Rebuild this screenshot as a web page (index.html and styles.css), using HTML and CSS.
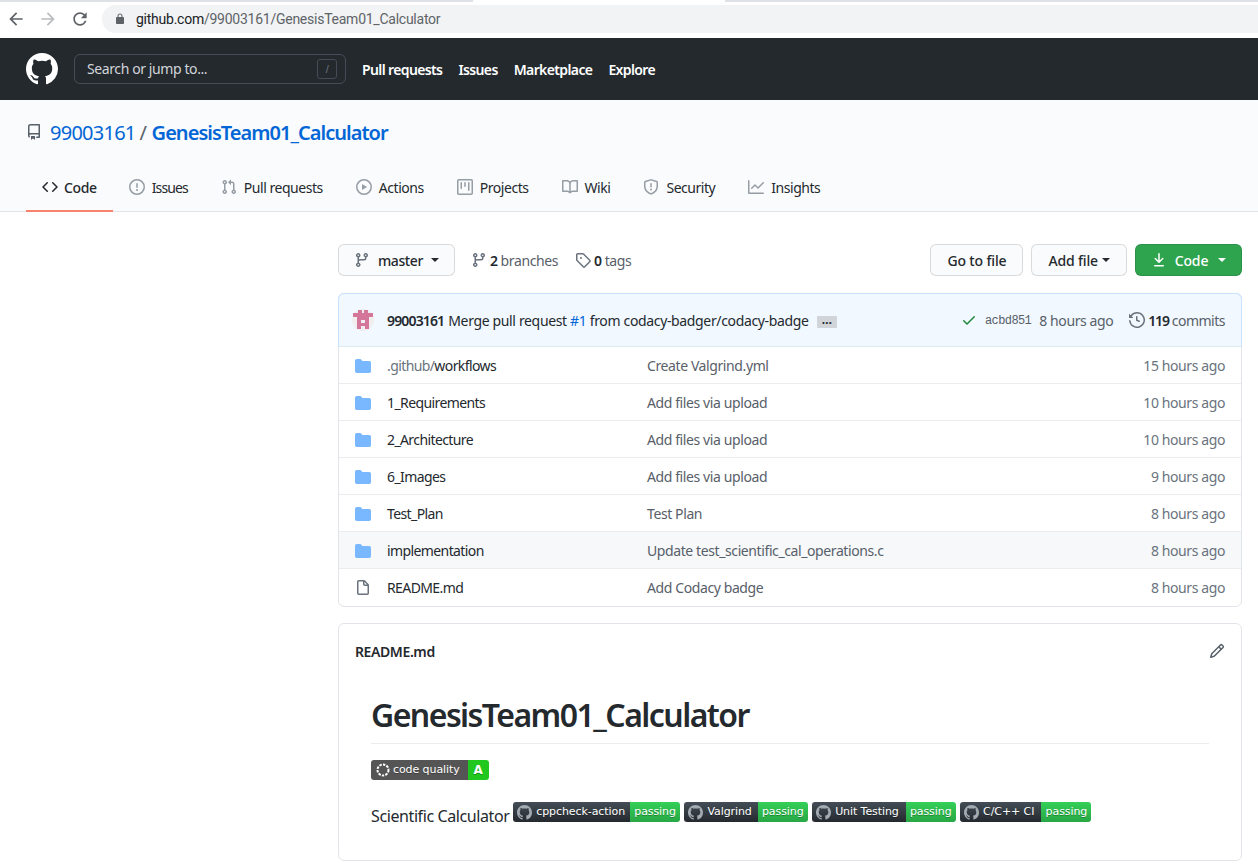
FILE: index.html
```html
<!DOCTYPE html>
<html lang="en">
<head>
<meta charset="UTF-8">
<title>GenesisTeam01_Calculator</title>
<link rel="stylesheet" href="styles.css">
</head>
<body>
<svg class="sprite" width="0" height="0">
  <symbol id="i-repo" viewBox="0 0 16 16"><path d="M2 2.5A2.5 2.5 0 014.5 0h8.75a.75.75 0 01.75.75v12.5a.75.75 0 01-.75.75h-2.5a.75.75 0 110-1.5h1.75v-2h-8a1 1 0 00-.714 1.7.75.75 0 01-1.072 1.05A2.495 2.495 0 012 11.5v-9zm10.5-1V9h-8c-.356 0-.694.074-1 .208V2.5a1 1 0 011-1h8zM5 12.25v3.25a.25.25 0 00.4.2l1.45-1.087a.25.25 0 01.3 0L8.6 15.7a.25.25 0 00.4-.2v-3.25a.25.25 0 00-.25-.25h-3.5a.25.25 0 00-.25.25z"/></symbol>
  <symbol id="i-code" viewBox="0 0 16 16"><path d="M4.72 3.22a.75.75 0 011.06 1.06L2.06 8l3.72 3.72a.75.75 0 11-1.06 1.06L.47 8.53a.75.75 0 010-1.06l4.25-4.25zm6.56 0a.75.75 0 10-1.06 1.06L13.94 8l-3.72 3.72a.75.75 0 101.06 1.06l4.25-4.25a.75.75 0 000-1.06l-4.25-4.25z"/></symbol>
  <symbol id="i-issue" viewBox="0 0 16 16"><path d="M8 1.5a6.5 6.5 0 100 13 6.5 6.5 0 000-13zM0 8a8 8 0 1116 0A8 8 0 010 8zm9 3a1 1 0 11-2 0 1 1 0 012 0zm-.25-6.25a.75.75 0 00-1.5 0v3.5a.75.75 0 001.5 0v-3.5z"/></symbol>
  <symbol id="i-pr" viewBox="0 0 16 16"><path d="M7.177 3.073L9.573.677A.25.25 0 0110 .854v4.792a.25.25 0 01-.427.177L7.177 3.427a.25.25 0 010-.354zM3.75 2.5a.75.75 0 100 1.5.75.75 0 000-1.5zm-2.25.75a2.25 2.25 0 113 2.122v5.256a2.251 2.251 0 11-1.5 0V5.372A2.25 2.25 0 011.5 3.25zM11 2.5h-1V4h1a1 1 0 011 1v5.628a2.251 2.251 0 101.5 0V5A2.5 2.5 0 0011 2.5zm1 10.25a.75.75 0 111.5 0 .75.75 0 01-1.5 0zM3.75 12a.75.75 0 100 1.5.75.75 0 000-1.5z"/></symbol>
  <symbol id="i-play" viewBox="0 0 16 16"><path d="M1.5 8a6.5 6.5 0 1113 0 6.5 6.5 0 01-13 0zM8 0a8 8 0 100 16A8 8 0 008 0zM6.379 5.227A.25.25 0 006 5.442v5.117a.25.25 0 00.379.214l4.264-2.559a.25.25 0 000-.428L6.379 5.227z"/></symbol>
  <symbol id="i-project" viewBox="0 0 16 16"><path d="M1.75 0A1.75 1.75 0 000 1.75v12.5C0 15.216.784 16 1.75 16h12.5A1.75 1.75 0 0016 14.25V1.75A1.75 1.75 0 0014.25 0H1.75zM1.5 1.75a.25.25 0 01.25-.25h12.5a.25.25 0 01.25.25v12.5a.25.25 0 01-.25.25H1.75a.25.25 0 01-.25-.25V1.75zM11.75 3a.75.75 0 00-.75.75v7.5a.75.75 0 001.5 0v-7.5a.75.75 0 00-.75-.75zm-8.25.75a.75.75 0 011.5 0v5.5a.75.75 0 01-1.5 0v-5.5zM8 3a.75.75 0 00-.75.75v3.5a.75.75 0 001.5 0v-3.5A.75.75 0 008 3z"/></symbol>
  <symbol id="i-book" viewBox="0 0 16 16"><path d="M0 1.75A.75.75 0 01.75 1h4.253c1.227 0 2.317.59 3 1.501A3.744 3.744 0 0111.006 1h4.245a.75.75 0 01.75.75v10.5a.75.75 0 01-.75.75h-4.507a2.25 2.25 0 00-1.591.659l-.622.621a.75.75 0 01-1.06 0l-.622-.621A2.25 2.25 0 005.258 13H.75a.75.75 0 01-.75-.75V1.75zm8.755 3a2.25 2.25 0 012.25-2.25H14.5v9h-3.757c-.71 0-1.4.201-1.992.572l.004-7.322zm-1.504 7.324l.004-5.073-.002-2.253A2.25 2.25 0 005.003 2.5H1.5v9h3.757a3.75 3.75 0 011.994.574z"/></symbol>
  <symbol id="i-shield" viewBox="0 0 16 16"><path d="M7.467.133a1.75 1.75 0 011.066 0l5.25 1.68A1.75 1.75 0 0115 3.48V7c0 1.566-.32 3.182-1.303 4.682-.983 1.498-2.585 2.813-5.032 3.855a1.7 1.7 0 01-1.33 0c-2.447-1.042-4.049-2.357-5.032-3.855C1.32 10.182 1 8.566 1 7V3.48a1.75 1.75 0 011.217-1.667l5.25-1.68zm.61 1.429a.25.25 0 00-.153 0l-5.25 1.68a.25.25 0 00-.174.238V7c0 1.358.275 2.666 1.057 3.86.784 1.194 2.121 2.34 4.366 3.297a.2.2 0 00.154 0c2.245-.956 3.582-2.104 4.366-3.298C13.225 9.666 13.5 8.36 13.5 7V3.48a.25.25 0 00-.174-.237l-5.25-1.68zM9 10.5a1 1 0 11-2 0 1 1 0 012 0zm-.25-5.75a.75.75 0 10-1.5 0v3a.75.75 0 001.5 0v-3z"/></symbol>
  <symbol id="i-graph" viewBox="0 0 16 16"><path d="M1.5 1.75a.75.75 0 00-1.5 0v12.5c0 .414.336.75.75.75h14.5a.75.75 0 000-1.5H1.5V1.75zm14.28 2.53a.75.75 0 00-1.06-1.06L10 7.94 7.53 5.47a.75.75 0 00-1.06 0L3.22 8.72a.75.75 0 001.06 1.06L7 7.06l2.47 2.47a.75.75 0 001.06 0l5.25-5.25z"/></symbol>
  <symbol id="i-branch" viewBox="0 0 16 16"><path d="M11.75 2.5a.75.75 0 100 1.5.75.75 0 000-1.5zm-2.25.75a2.25 2.25 0 113 2.122V6A2.5 2.5 0 0110 8.5H6a1 1 0 00-1 1v1.128a2.251 2.251 0 11-1.5 0V5.372a2.25 2.25 0 111.5 0v1.836A2.492 2.492 0 016 7h4a1 1 0 001-1v-.628A2.25 2.25 0 019.5 3.25zM4.25 12a.75.75 0 100 1.5.75.75 0 000-1.5zM3.5 3.25a.75.75 0 111.5 0 .75.75 0 01-1.5 0z"/></symbol>
  <symbol id="i-tag" viewBox="0 0 16 16"><path d="M2.5 7.775V2.75a.25.25 0 01.25-.25h5.025a.25.25 0 01.177.073l6.25 6.25a.25.25 0 010 .354l-5.025 5.025a.25.25 0 01-.354 0l-6.25-6.25a.25.25 0 01-.073-.177zm-1.5 0V2.75C1 1.784 1.784 1 2.75 1h5.025c.464 0 .91.184 1.238.513l6.25 6.25a1.75 1.75 0 010 2.474l-5.026 5.026a1.75 1.75 0 01-2.474 0l-6.25-6.25A1.75 1.75 0 011 7.775zM6 5a1 1 0 100 2 1 1 0 000-2z"/></symbol>
  <symbol id="i-download" viewBox="0 0 16 16"><path d="M7.47 10.78a.75.75 0 001.06 0l3.75-3.75a.75.75 0 00-1.06-1.06L8.75 8.44V1.75a.75.75 0 00-1.5 0v6.69L4.78 5.97a.75.75 0 00-1.06 1.06l3.75 3.75zM3.75 13a.75.75 0 000 1.5h8.5a.75.75 0 000-1.5h-8.5z"/></symbol>
  <symbol id="i-check" viewBox="0 0 16 16"><path d="M13.78 4.22a.75.75 0 010 1.06l-7.25 7.25a.75.75 0 01-1.06 0L2.22 9.28a.75.75 0 011.06-1.06L6 10.94l6.72-6.72a.75.75 0 011.06 0z"/></symbol>
  <symbol id="i-history" viewBox="0 0 16 16"><path d="M1.643 3.143L.427 1.927A.25.25 0 000 2.104V5.75c0 .138.112.25.25.25h3.646a.25.25 0 00.177-.427L2.715 4.215a6.5 6.5 0 11-1.18 4.458.75.75 0 10-1.493.154 8.001 8.001 0 101.6-5.684zM7.75 4a.75.75 0 01.75.75v2.992l2.028.812a.75.75 0 01-.557 1.392l-2.5-1A.75.75 0 017 8.25v-3.5A.75.75 0 017.75 4z"/></symbol>
  <symbol id="i-folder" viewBox="0 0 16 16"><path d="M1.75 1A1.75 1.75 0 000 2.75v10.5C0 14.216.784 15 1.75 15h12.5A1.75 1.75 0 0016 13.25v-8.5A1.75 1.75 0 0014.25 3H7.5a.25.25 0 01-.2-.1l-.9-1.2C6.07 1.26 5.55 1 5 1H1.75z"/></symbol>
  <symbol id="i-file" viewBox="0 0 16 16"><path d="M3.75 1.5a.25.25 0 00-.25.25v11.5c0 .138.112.25.25.25h8.5a.25.25 0 00.25-.25V6H9.75A1.75 1.75 0 018 4.25V1.5H3.75zm5.75.56v2.19c0 .138.112.25.25.25h2.19L9.5 2.06zM2 1.75C2 .784 2.784 0 3.75 0h5.086c.464 0 .909.184 1.237.513l3.414 3.414c.329.328.513.773.513 1.237v8.086A1.75 1.75 0 0112.25 15h-8.5A1.75 1.75 0 012 13.25V1.75z"/></symbol>
  <symbol id="i-pencil" viewBox="0 0 16 16"><path d="M11.013 1.427a1.75 1.75 0 012.474 0l1.086 1.086a1.75 1.75 0 010 2.474l-8.61 8.61c-.21.21-.47.364-.756.445l-3.251.93a.75.75 0 01-.927-.928l.929-3.25a1.75 1.75 0 01.445-.758l8.61-8.61zm1.414 1.06a.25.25 0 00-.354 0L10.811 3.75l1.439 1.44 1.263-1.263a.25.25 0 000-.354l-1.086-1.086zM11.189 6.25L9.75 4.81l-6.286 6.287a.25.25 0 00-.064.108l-.558 1.953 1.953-.558a.249.249 0 00.108-.064l6.286-6.286z"/></symbol>
  <symbol id="i-github" viewBox="0 0 16 16"><path d="M8 0C3.58 0 0 3.58 0 8c0 3.54 2.29 6.53 5.47 7.59.4.07.55-.17.55-.38 0-.19-.01-.82-.01-1.49-2.01.37-2.53-.49-2.69-.94-.09-.23-.48-.94-.82-1.13-.28-.15-.68-.52-.01-.53.63-.01 1.08.58 1.23.82.72 1.21 1.87.87 2.33.66.07-.52.28-.87.51-1.07-1.78-.2-3.64-.89-3.64-3.95 0-.87.31-1.59.82-2.15-.08-.2-.36-1.02.08-2.12 0 0 .67-.21 2.2.82.64-.18 1.32-.27 2-.27.68 0 1.36.09 2 .27 1.53-1.04 2.2-.82 2.2-.82.44 1.1.16 1.92.08 2.12.51.56.82 1.27.82 2.15 0 3.07-1.87 3.75-3.65 3.95.29.25.54.73.54 1.48 0 1.07-.01 1.93-.01 2.2 0 .21.15.46.55.38A8.013 8.013 0 0016 8c0-4.42-3.58-8-8-8z"/></symbol>
</svg>

<div class="chrome">
  <div class="tabstrip"></div>
  <div class="toolbar">
    <svg class="nav-btn" viewBox="0 0 24 24"><path d="M20 11H7.83l5.59-5.59L12 4l-8 8 8 8 1.41-1.41L7.83 13H20v-2z"/></svg>
    <svg class="nav-btn off" viewBox="0 0 24 24"><path d="M4 11h12.17l-5.59-5.59L12 4l8 8-8 8-1.41-1.41L16.17 13H4v-2z"/></svg>
    <svg class="nav-btn" viewBox="0 0 24 24"><path d="M17.65 6.35C16.2 4.9 14.21 4 12 4c-4.42 0-7.99 3.58-7.99 8s3.57 8 7.99 8c3.73 0 6.84-2.55 7.73-6h-2.08c-.82 2.33-3.04 4-5.65 4-3.31 0-6-2.69-6-6s2.69-6 6-6c1.66 0 3.14.69 4.22 1.78L13 11h7V4l-2.35 2.35z"/></svg>
    <div class="omnibox">
      <svg class="lock" viewBox="0 0 24 24"><path d="M18 8h-1V6c0-2.76-2.24-5-5-5S7 3.24 7 6v2H6c-1.1 0-2 .9-2 2v10c0 1.1.9 2 2 2h12c1.1 0 2-.9 2-2V10c0-1.1-.9-2-2-2zM9 6c0-1.66 1.34-3 3-3s3 1.34 3 3v2H9V6z"/></svg>
      <span class="url"><b>github.com</b>/99003161/GenesisTeam01_Calculator</span>
    </div>
  </div>
</div>

<header class="topbar">
  <svg class="logo"><use href="#i-github"/></svg>
  <div class="search">
    <span class="search-text">Search or jump to...</span>
    <kbd class="slash">/</kbd>
  </div>
  <nav class="topnav">
    <a>Pull requests</a>
    <a>Issues</a>
    <a>Marketplace</a>
    <a>Explore</a>
  </nav>
</header>

<section class="repohead">
  <h2 class="reponame">
    <svg class="icon repo-icon"><use href="#i-repo"/></svg>
    <a class="owner">99003161</a>
    <span class="sep">/</span>
    <a class="name">GenesisTeam01_Calculator</a>
  </h2>
  <nav class="tabs">
    <a class="tab selected"><svg class="icon"><use href="#i-code"/></svg>Code</a>
    <a class="tab tight"><svg class="icon"><use href="#i-issue"/></svg>Issues</a>
    <a class="tab"><svg class="icon"><use href="#i-pr"/></svg>Pull requests</a>
    <a class="tab"><svg class="icon"><use href="#i-play"/></svg>Actions</a>
    <a class="tab"><svg class="icon"><use href="#i-project"/></svg>Projects</a>
    <a class="tab"><svg class="icon"><use href="#i-book"/></svg>Wiki</a>
    <a class="tab"><svg class="icon"><use href="#i-shield"/></svg>Security</a>
    <a class="tab"><svg class="icon"><use href="#i-graph"/></svg>Insights</a>
  </nav>
</section>

<main class="content">
  <div class="actions">
    <button class="btn branch-btn"><svg class="icon"><use href="#i-branch"/></svg>master<i class="caret"></i></button>
    <a class="count"><svg class="icon"><use href="#i-branch"/></svg><b>2</b> branches</a>
    <a class="count"><svg class="icon"><use href="#i-tag"/></svg><b>0</b> tags</a>
    <span class="grow"></span>
    <button class="btn">Go to file</button>
    <button class="btn">Add file<i class="caret"></i></button>
    <button class="btn green"><svg class="icon"><use href="#i-download"/></svg>Code<i class="caret"></i></button>
  </div>

  <div class="files">
    <div class="commit">
      <svg class="avatar" viewBox="0 0 22 22">
        <circle cx="11" cy="11" r="11" fill="#f0eeee"/>
        <path fill="#d3769a" d="M6 1h4v3H6zM12 1h4v3h-4zM1 4h20v4H1zM5 8h12v12H5zM9 11h4v3H9zM9 17h4v3H9z"/>
      </svg>
      <a class="author">99003161</a>
      <span class="msg">Merge pull request <a class="link">#1</a> from codacy-badger/codacy-badge</span>
      <span class="ellipsis">…</span>
      <span class="grow"></span>
      <svg class="icon check"><use href="#i-check"/></svg>
      <code class="sha">acbd851</code>
      <span class="when">8 hours ago</span>
      <a class="commits"><svg class="icon"><use href="#i-history"/></svg><b>119</b> commits</a>
    </div>
    <div class="row"><svg class="icon dir"><use href="#i-folder"/></svg><a class="fname"><span class="dim">.github/</span>workflows</a><a class="fmsg">Create Valgrind.yml</a><span class="age">15 hours ago</span></div>
    <div class="row"><svg class="icon dir"><use href="#i-folder"/></svg><a class="fname">1_Requirements</a><a class="fmsg">Add files via upload</a><span class="age">10 hours ago</span></div>
    <div class="row"><svg class="icon dir"><use href="#i-folder"/></svg><a class="fname">2_Architecture</a><a class="fmsg">Add files via upload</a><span class="age">10 hours ago</span></div>
    <div class="row"><svg class="icon dir"><use href="#i-folder"/></svg><a class="fname">6_Images</a><a class="fmsg">Add files via upload</a><span class="age">9 hours ago</span></div>
    <div class="row"><svg class="icon dir"><use href="#i-folder"/></svg><a class="fname">Test_Plan</a><a class="fmsg">Test Plan</a><span class="age">8 hours ago</span></div>
    <div class="row hover"><svg class="icon dir"><use href="#i-folder"/></svg><a class="fname">implementation</a><a class="fmsg">Update test_scientific_cal_operations.c</a><span class="age">8 hours ago</span></div>
    <div class="row"><svg class="icon doc"><use href="#i-file"/></svg><a class="fname">README.md</a><a class="fmsg">Add Codacy badge</a><span class="age">8 hours ago</span></div>
  </div>

  <div class="readme">
    <div class="readme-head">
      <span>README.md</span>
      <svg class="icon pencil"><use href="#i-pencil"/></svg>
    </div>
    <article class="markdown">
      <h1>GenesisTeam01_Calculator</h1>
      <p class="quality">
        <span class="badge">
          <span class="b-left grey">
            <svg class="spin" viewBox="0 0 14 14"><circle cx="7" cy="7" r="5.500" fill="none" stroke="#fff" stroke-width="2" stroke-dasharray="2.400 1.200"/></svg>code quality
          </span>
          <span class="b-right grade">A</span>
        </span>
      </p>
      <p class="desc">Scientific Calculator
        <span class="badge gh"><span class="b-left"><svg class="b-cat"><use href="#i-github"/></svg>cppcheck-action</span><span class="b-right">passing</span></span>
        <span class="badge gh"><span class="b-left mid"><svg class="b-cat"><use href="#i-github"/></svg>Valgrind</span><span class="b-right">passing</span></span>
        <span class="badge gh"><span class="b-left wide"><svg class="b-cat"><use href="#i-github"/></svg>Unit Testing</span><span class="b-right">passing</span></span>
        <span class="badge gh"><span class="b-left wide"><svg class="b-cat"><use href="#i-github"/></svg>C/C++ CI</span><span class="b-right">passing</span></span>
      </p>
    </article>
  </div>
</main>
</body>
</html>
```

FILE: styles.css
```css
* {
    box-sizing: border-box;
}
body {
    margin: 0;
    background-color: #fff;
    color: #24292e;
    font-family: "Noto Sans", "Open Sans", sans-serif;
    font-size: 14px;
    letter-spacing: -0.4px;
    overflow: hidden;
}
a {
    color: inherit;
    text-decoration: none;
}
svg {
    fill-rule: evenodd;
}
.sprite {
    position: absolute;
}
.icon {
    width: 16px;
    height: 16px;
    fill: #6a737d;
    flex: none;
}
.grow {
    flex: 1;
}

/* browser bar */
.chrome {
    height: 38px;
    background-color: #fff;
}
.tabstrip {
    height: 2px;
    background: linear-gradient(to right, #dee1e6 473px, #fff 473px, #fff 725px, #dee1e6 725px);
}
.toolbar {
    display: flex;
    align-items: center;
    height: 30px;
    margin-top: 2px;
    padding-left: 6px;
}
.nav-btn {
    width: 20px;
    height: 20px;
    margin-right: 12px;
    fill: #5f6368;
}
.nav-btn.off {
    fill: #babcbe;
}
.omnibox {
    flex: 1;
    display: flex;
    align-items: center;
    height: 28px;
    padding-left: 12px;
    background-color: #f1f3f4;
    border-radius: 14px 0 0 14px;
}
.lock {
    width: 12px;
    height: 12px;
    margin-right: 10px;
    fill: #5f6368;
}
.url {
    font-family: Roboto, sans-serif;
    font-size: 14px;
    letter-spacing: -0.25px;
    color: #5f6368;
}
.url b {
    font-weight: 400;
    color: #202124;
}

/* github header */
.topbar {
    display: flex;
    align-items: center;
    height: 62px;
    padding: 0 26px;
    background-color: #24292e;
    color: #fff;
}
.logo {
    width: 32px;
    height: 32px;
    fill: #fff;
    margin-right: 16px;
}
.search {
    display: flex;
    align-items: center;
    justify-content: space-between;
    width: 272px;
    height: 30px;
    padding: 0 8px 0 12px;
    border: 1px solid #444d56;
    border-radius: 6px;
    color: #d1d5da;
}
.search-text {
    margin-top: -2px;
}
.slash {
    width: 20px;
    height: 20px;
    border: 1px solid #444d56;
    border-radius: 3px;
    color: #6a737d;
    font: 11px "Liberation Sans", sans-serif;
    line-height: 18px;
    text-align: center;
}
.topnav {
    display: flex;
    gap: 16px;
    margin-left: 16px;
    font-weight: 600;
    letter-spacing: -0.62px;
}

/* repo header */
.repohead {
    height: 112px;
    padding: 0 26px;
    background-color: #fafbfc;
    border-bottom: 1px solid #e1e4e8;
}
.reponame {
    display: flex;
    align-items: center;
    height: 26px;
    margin: 0;
    position: relative;
    top: 19px;
    font-size: 20px;
    font-weight: 400;
}
.repo-icon {
    margin-right: 8px;
    fill: #586069;
}
.owner, .name {
    color: #0366d6;
}
.owner {
    letter-spacing: -0.75px;
}
.sep {
    margin: 0 5px 0 4px;
    color: #586069;
}
.name {
    font-weight: 600;
    letter-spacing: -0.97px;
}
.tabs {
    display: flex;
    margin-top: 46px;
}
.tab {
    display: flex;
    align-items: center;
    gap: 7px;
    height: 40px;
    padding: 0 16px 8px;
    margin-right: 1px;
    border-bottom: 2px solid transparent;
    color: #24292e;
    letter-spacing: -0.46px;
}
.tab .icon {
    fill: #959da5;
}
.tab.tight {
    letter-spacing: -0.9px;
}
.tab.selected {
    gap: 6px;
    margin-right: 0;
    border-bottom-color: #f9826c;
    font-weight: 500;
    letter-spacing: -0.35px;
}
.tab.selected .icon {
    fill: #24292e;
}

/* main column */
.content {
    padding: 32px 16px 0 338px;
}
.actions {
    display: flex;
    align-items: center;
    height: 32px;
    margin-bottom: 17px;
}
.btn {
    display: flex;
    align-items: center;
    justify-content: center;
    height: 32px;
    margin-left: 8px;
    padding: 0 16px;
    background-color: #fafbfc;
    border: 1px solid rgba(27, 31, 35, 0.15);
    border-radius: 6px;
    color: #24292e;
    font: inherit;
    letter-spacing: -0.15px;
    font-weight: 500;
}
.branch-btn {
    margin-left: 0;
    padding: 0 15px;
    gap: 8px;
    letter-spacing: -0.4px;
}
.green {
    gap: 8px;
    background-color: #2ea44f;
    color: #fff;
    width: 107px;
}
.green .icon {
    fill: #fff;
}
.caret {
    display: inline-block;
    margin-left: 4px;
    border: 4px solid transparent;
    border-top-color: currentColor;
    border-bottom: 0;
}
.branch-btn .caret {
    margin-left: 0;
}
.green .caret {
    margin-left: 2px;
}
.count {
    display: flex;
    align-items: center;
    gap: 3px;
    margin-left: 16px;
    color: #586069;
}
.count b {
    color: #24292e;
    font-weight: 600;
}
.count + .count {
    margin-left: 17px;
}

/* file list */
.files {
    border: 1px solid #e1e4e8;
    border-radius: 6px;
}
.commit {
    display: flex;
    align-items: center;
    height: 54px;
    margin: -1px -1px 0;
    padding: 0 16px 0 13px;
    background-color: #f1f8ff;
    border: 1px solid #c8e1ff;
    border-bottom-color: #dde9f5;
    border-radius: 6px 6px 0 0;
}
.avatar {
    width: 22px;
    height: 22px;
    margin-right: 13px;
}
.author {
    font-weight: 600;
    margin-right: 4px;
    letter-spacing: -0.85px;
}
.msg {
    letter-spacing: -0.35px;
}
.link {
    color: #0366d6;
}
.ellipsis {
    width: 20px;
    height: 12px;
    margin-left: 8px;
    margin-top: 3px;
    background-color: #d1d5da;
    border-radius: 1px;
    font-size: 12px;
    font-weight: 700;
    line-height: 8px;
    text-align: center;
}
.check {
    fill: #22863a;
    margin-right: 8px;
}
.sha {
    margin-top: 2px;
    margin-right: 8px;
    font-family: "Liberation Mono", monospace;
    font-size: 12px;
    letter-spacing: -0.6px;
    color: #586069;
}
.when {
    color: #586069;
    margin-right: 16px;
}
.commits {
    display: flex;
    align-items: center;
    gap: 3px;
    color: #586069;
    letter-spacing: -0.5px;
}
.commits b {
    color: #24292e;
    font-weight: 600;
    letter-spacing: -1.2px;
}
.row {
    display: grid;
    grid-template-columns: 16px 260px 1fr auto;
    align-items: center;
    height: 37px;
    padding: 1px 16px 0;
    border-bottom: 1px solid #eaecef;
}
.row:last-child {
    padding-top: 0;
    border-bottom: 0;
    border-radius: 0 0 6px 6px;
}
.row.hover {
    background-color: #f6f8fa;
}
.row .icon {
    margin-top: 1px;
}
.fname {
    margin-left: 16px;
    letter-spacing: -0.6px;
}
.fmsg {
    color: #586069;
    margin-left: 16px;
}
.dim {
    color: #6a737d;
}
.age {
    color: #6a737d;
}
.dir {
    fill: #79b8ff;
}

/* readme */
.readme {
    height: 238px;
    margin-top: 16px;
    border: 1px solid #e1e4e8;
    border-radius: 6px;
}
.readme-head {
    display: flex;
    align-items: center;
    justify-content: space-between;
    height: 54px;
    padding: 0 16px;
    font-weight: 600;
}
.pencil {
    fill: #586069;
}
.markdown {
    padding: 17px 32px 0;
}
.markdown h1 {
    margin: 0;
    padding-bottom: 8px;
    font-size: 32px;
    font-weight: 600;
    letter-spacing: -1.55px;
    line-height: 1.25;
    border-bottom: 1px solid #eaecef;
}
.quality {
    margin: 16px 0 0;
    height: 20px;
}
.desc {
    margin: 22px 0 0;
    font-size: 16px;
    letter-spacing: -0.4px;
}
.badge {
    display: inline-flex;
    height: 20px;
    border-radius: 3px;
    overflow: hidden;
    color: #fff;
    font: 11px/20px "DejaVu Sans", sans-serif;
    letter-spacing: -0.08px;
    text-shadow: 0 1px 0 rgba(1, 1, 1, 0.3);
    vertical-align: 2px;
}
.gh + .gh {
    margin-left: 0.6px;
}
.b-left, .b-right {
    display: flex;
    align-items: center;
    padding: 0 5px;
}
.grey {
    background-color: #555;
    padding-right: 8px;
}
.spin {
    width: 14px;
    height: 14px;
    margin-right: 3px;
}
.grade {
    width: 21px;
    justify-content: center;
    background-color: #1fc71f;
    font-weight: 700;
    font-size: 12px;
}
.gh .b-left {
    background: linear-gradient(#444d56, #24292e);
    padding-left: 4px;
}
.gh .b-left.mid {
    padding-right: 6px;
}
.gh .b-left.wide {
    padding-right: 7px;
}
.gh .b-right {
    width: 50px;
    padding: 0;
    justify-content: center;
    background: linear-gradient(#34d058, #28a745);
}
.b-cat {
    width: 15px;
    height: 15px;
    margin-right: 4px;
    fill: #a3aab1;
}
```
